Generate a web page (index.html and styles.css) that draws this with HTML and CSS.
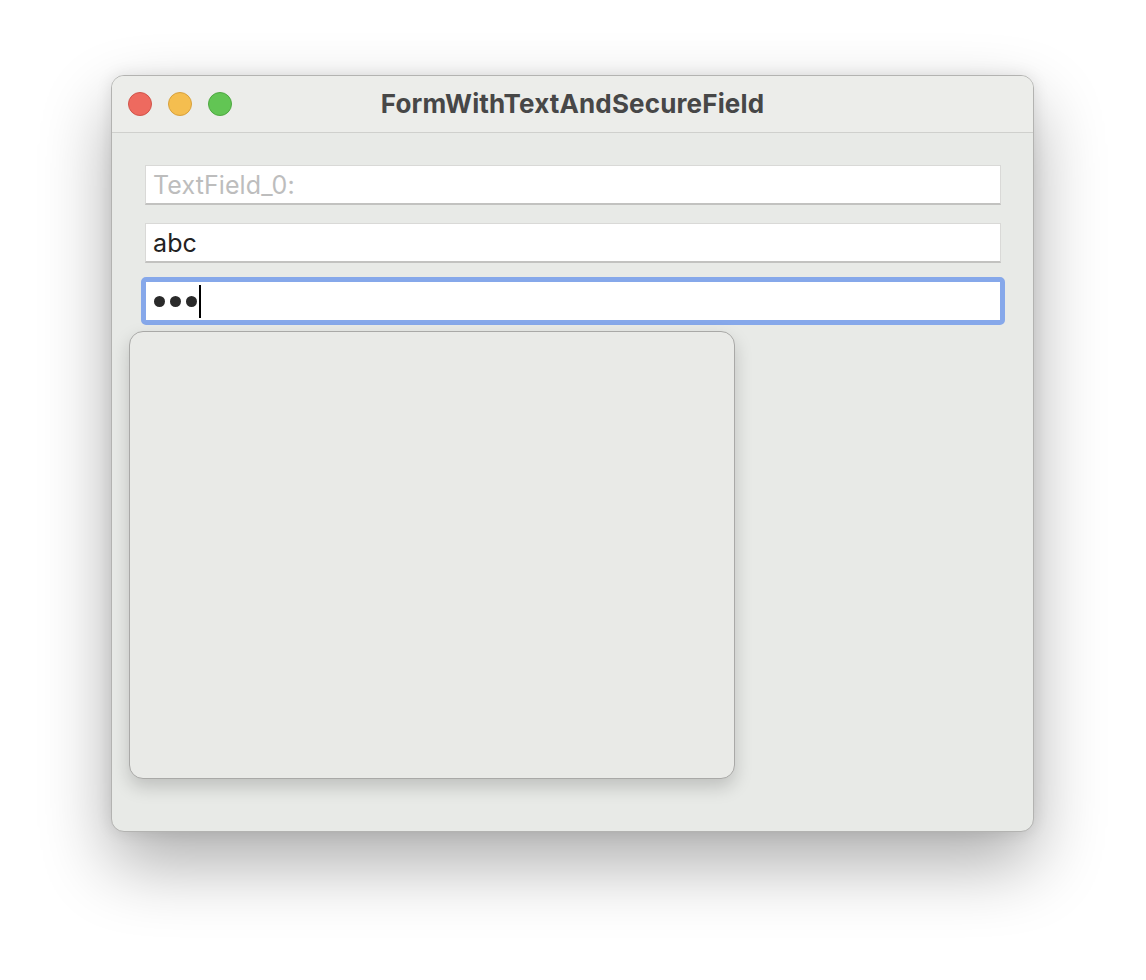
FILE: index.html
```html
<!DOCTYPE html>
<html>
<head>
<meta charset="utf-8">
<link rel="stylesheet" href="styles.css">
</head>
<body>
<div class="stage">
  <div class="window">
    <div class="titlebar">
      <div class="lights">
        <span class="light red"></span>
        <span class="light yellow"></span>
        <span class="light green"></span>
      </div>
      <div class="title">FormWithTextAndSecureField</div>
    </div>
    <div class="content">
      <div class="field"><span class="placeholder">TextField_0:</span></div>
      <div class="field"><span class="value">abc</span></div>
      <div class="focus-ring">
        <div class="field secure"><span class="dot"></span><span class="dot"></span><span class="dot"></span><span class="caret"></span></div>
      </div>
    </div>
    <div class="popup"></div>
  </div>
</div>
</body>
</html>
```
FILE: styles.css
```css
html, body {
  margin: 0;
  padding: 0;
  background: #ffffff;
}
.stage {
  width: 1146px;
  height: 980px;
  padding: 75px 0 0 111px;
  box-sizing: border-box;
}
.window {
  position: relative;
  width: 923px;
  height: 757px;
  box-sizing: border-box;
  border: 1px solid #b3b3b1;
  border-radius: 13px;
  background: #e8eae7;
  box-shadow: 0 32px 70px rgba(0,0,0,0.32), 0 0 16px rgba(0,0,0,0.10);
  font-family: Inter, "Liberation Sans", sans-serif;
}
.titlebar {
  position: relative;
  height: 56px;
  background: #ecedea;
  border-bottom: 1px solid #cfd0cd;
  border-radius: 12px 12px 0 0;
  display: flex;
  align-items: center;
  justify-content: center;
}
.lights {
  position: absolute;
  left: 16px;
  top: 16px;
  display: flex;
  gap: 16px;
}
.light {
  width: 24px;
  height: 24px;
  border-radius: 50%;
  box-sizing: border-box;
}
.red { background: #ee6a5f; border: 1px solid #d1544a; }
.yellow { background: #f5be4f; border: 1px solid #d8a13c; }
.green { background: #62c554; border: 1px solid #4ea841; }
.title {
  font-size: 26px;
  font-weight: 700;
  color: #474747;
  letter-spacing: 0.15px;
  margin-top: -2px;
}
.content {
  padding: 32px 32px 0 33px;
  display: flex;
  flex-direction: column;
  gap: 18px;
}
.field {
  height: 40px;
  background: #ffffff;
  box-sizing: border-box;
  border-top: 1px solid #d9d9d7;
  border-left: 1px solid #d9d9d7;
  border-right: 1px solid #d9d9d7;
  border-bottom: 2px solid #c2c2c0;
  display: flex;
  align-items: center;
  padding-left: 7px;
  font-size: 25px;
  letter-spacing: 0.1px;
}
.placeholder { color: #bdbdbd; }
.value { color: #222222; }
.focus-ring {
  margin: -4px -4px 0 -4px;
  border: 5px solid #86a8ea;
  border-radius: 5px;
  background: #ffffff;
}
.field.secure {
  border: none;
  height: 38px;
  padding-left: 8px;
  gap: 5px;
}
.dot {
  width: 11px;
  height: 11px;
  border-radius: 50%;
  background: #2a2a2a;
}
.caret {
  width: 2px;
  height: 33px;
  background: #000;
  margin-left: -3px;
}
.popup {
  position: absolute;
  left: 17px;
  top: 255px;
  width: 606px;
  height: 448px;
  box-sizing: border-box;
  background: #e9eae7;
  border: 1px solid #a9a9a7;
  border-radius: 14px;
  box-shadow: 0 8px 18px rgba(0,0,0,0.18);
}
```
